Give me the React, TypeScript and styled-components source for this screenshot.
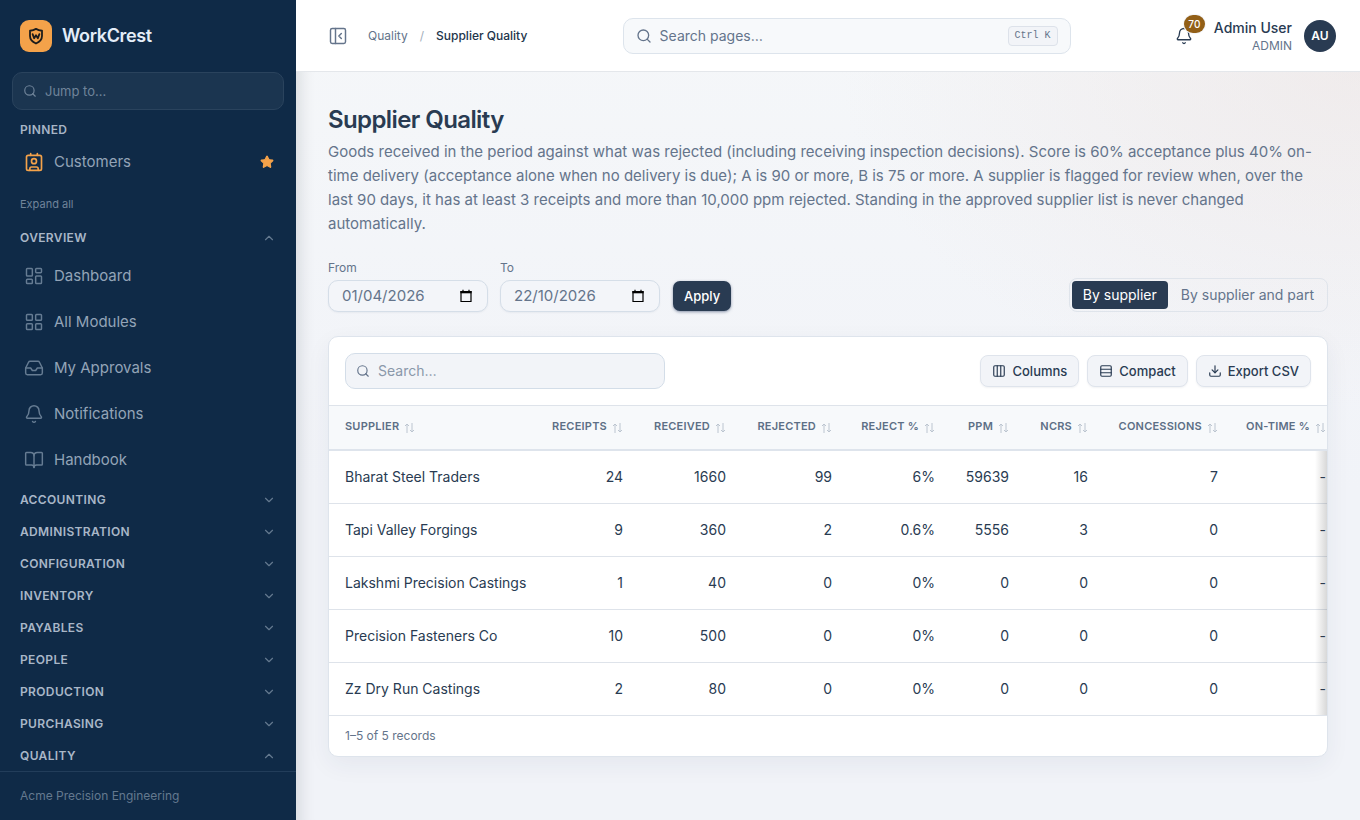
import React from 'react';
import styled, { createGlobalStyle, css } from 'styled-components';
import {
  Bell,
  BookOpen,
  ChevronDown,
  ChevronUp,
  Columns3,
  Contact,
  Download,
  Inbox,
  LayoutDashboard,
  LayoutGrid,
  PanelLeftClose,
  Rows3,
  Search,
  Star,
} from 'lucide-react';

const GlobalStyle = createGlobalStyle`
  *, *::before, *::after { box-sizing: border-box; }
  body {
    margin: 0;
    font-family: Inter, 'Liberation Sans', sans-serif;
    font-size: 14px;
    line-height: 20px;
    color: #293b52;
    -webkit-font-smoothing: antialiased;
  }
  button, input { font: inherit; color: inherit; }
  button { cursor: pointer; }
  h1, p { margin: 0; }
`;

const Shell = styled.div`
  display: grid;
  grid-template-columns: 296px minmax(0, 1fr);
  height: 100vh;
  overflow: hidden;
`;

const Sidebar = styled.aside`
  display: flex;
  flex-direction: column;
  min-height: 0;
  background: #0f2a47;
  color: #a7b5c6;
`;

const Brand = styled.div`
  display: flex;
  align-items: center;
  gap: 10px;
  height: 72px;
  flex: none;
  padding: 0 20px;
  font-size: 18px;
  font-weight: 600;
  letter-spacing: -0.02em;
  color: #e4edf8;
`;

const BrandMark = styled.span`
  display: grid;
  place-items: center;
  width: 32px;
  height: 32px;
  border-radius: 9px;
  background: #f4a24a;
  color: #1c1c1c;
`;

const JumpBox = styled.label`
  display: flex;
  align-items: center;
  gap: 8px;
  flex: none;
  height: 38px;
  margin: 0 12px;
  padding: 0 10px;
  border: 1px solid #2a435d;
  border-radius: 10px;
  background: #1b3550;
  color: #70849a;
`;

const BareInput = styled.input<{ $size: number; $hint: string }>`
  flex: 1;
  min-width: 0;
  padding: 0;
  border: 0;
  outline: 0;
  background: transparent;
  font-size: ${(p) => p.$size}px;
  &::placeholder {
    color: ${(p) => p.$hint};
    opacity: 1;
  }
`;

const Nav = styled.nav`
  flex: 1;
  min-height: 0;
  overflow: hidden;
`;

const Section = styled.button`
  display: flex;
  align-items: center;
  justify-content: space-between;
  width: 100%;
  height: 32px;
  padding: 0 20px;
  border: 0;
  background: none;
  font-size: 12px;
  font-weight: 600;
  letter-spacing: 0.03em;
  text-transform: uppercase;
  color: #a9b7c8;
  svg { color: #64798f; }
`;

const PinnedTitle = styled.div`
  padding: 12px 20px 0;
  font-size: 12px;
  line-height: 16px;
  font-weight: 600;
  letter-spacing: 0.03em;
  text-transform: uppercase;
`;

const ItemLink = styled.a<{ $pinned?: boolean }>`
  display: flex;
  align-items: center;
  gap: 10px;
  height: ${(p) => (p.$pinned ? 48 : 46)}px;
  padding: 0 22px ${(p) => (p.$pinned ? 0 : 2)}px 24px;
  font-size: 15px;
  color: #93a4b7;
  text-decoration: none;
  svg { color: ${(p) => (p.$pinned ? '#f4a24a' : '#667c93')}; }
  span { flex: 1; }
`;

const ExpandAll = styled.button`
  display: block;
  height: 36px;
  padding: 0 20px;
  border: 0;
  background: none;
  font-size: 11px;
  color: #70849a;
`;

const Company = styled.div`
  flex: none;
  height: 49px;
  padding: 16px 20px;
  border-top: 1px solid #223d5a;
  font-size: 12px;
  line-height: 16px;
  color: #64798f;
`;

const Main = styled.div`
  display: flex;
  flex-direction: column;
  min-width: 0;
  min-height: 0;
  background:
    radial-gradient(ellipse 520px 340px at 100% 8%, rgba(234, 222, 220, 0.45), rgba(234, 222, 220, 0) 100%),
    linear-gradient(180deg, #f5f7f9 0%, #f1f3f8 60%);
`;

const Topbar = styled.header`
  display: flex;
  align-items: center;
  flex: none;
  height: 72px;
  padding: 0 24px 0 32px;
  background: #fff;
  border-bottom: 1px solid #e4e7eb;
`;

const Crumbs = styled.nav`
  display: flex;
  align-items: center;
  gap: 12px;
  font-size: 12px;
  a { color: #64748b; text-decoration: none; }
  i { color: #a3aebb; font-style: normal; }
  strong { color: #22344b; font-weight: 500; }
`;

const IconButton = styled.button`
  position: relative;
  display: grid;
  place-items: center;
  padding: 0;
  border: 0;
  background: none;
`;

const Collapse = styled(IconButton)`
  margin-right: 8px;
  color: #64748b;
`;

const Alerts = styled(IconButton)`
  width: 36px;
  height: 36px;
`;

const PageSearch = styled.label`
  display: flex;
  align-items: center;
  gap: 8px;
  flex: 0 1 448px;
  height: 36px;
  margin: 0 auto;
  padding: 0 12px;
  border: 1px solid #dde4ec;
  border-radius: 10px;
  background: #f7f9fb;
  color: #64748b;
`;

const Kbd = styled.kbd`
  padding: 0 6px;
  border: 1px solid #dde2ea;
  border-radius: 4px;
  background: #f2f4f8;
  font-family: 'Liberation Mono', monospace;
  font-size: 10px;
  line-height: 18px;
`;

const Account = styled.div`
  display: flex;
  align-items: center;
  gap: 12px;
`;

const Badge = styled.span`
  position: absolute;
  top: -3px;
  right: -3px;
  min-width: 21px;
  padding: 0 4px;
  border-radius: 9px;
  background: #925f17;
  box-shadow: 0 0 0 1px #f3f5f9;
  color: #fff;
  font-size: 10px;
  line-height: 18px;
  font-weight: 500;
`;

const Person = styled.div`
  padding-top: 2px;
  text-align: right;
  font-size: 14px;
  line-height: 18px;
  font-weight: 500;
  small {
    display: block;
    font-size: 12px;
    line-height: 18px;
    font-weight: 400;
    color: #64748b;
  }
`;

const Avatar = styled.span`
  display: grid;
  place-items: center;
  width: 32px;
  height: 32px;
  border-radius: 50%;
  background: #293b52;
  color: #fff;
  font-size: 12px;
  font-weight: 600;
`;

const Content = styled.main`
  flex: 1;
  min-height: 0;
  padding: 32px;
  box-shadow: inset 20px 0 16px -16px rgba(20, 24, 32, 0.12);
`;

const Title = styled.h1`
  font-size: 24px;
  line-height: 32px;
  font-weight: 600;
  letter-spacing: -0.025em;
`;

const Lead = styled.p`
  margin-top: 4px;
  font-size: 15px;
  line-height: 24px;
  color: #64748b;
`;

const Filters = styled.form`
  display: flex;
  align-items: flex-end;
  gap: 12px;
  margin-top: 24px;
`;

const Field = styled.label`
  display: flex;
  flex-direction: column;
  gap: 4px;
  font-size: 12px;
  line-height: 16px;
  color: #64748b;
`;

const DateBox = styled.span`
  display: flex;
  align-items: center;
  width: 160px;
  height: 32px;
  padding: 0 14px 0 13px;
  border: 1px solid #d5dee8;
  border-radius: 10px;
  background: #f3f5f9;
  box-shadow: 0 1px 2px rgba(20, 40, 70, 0.05);
  svg { color: #000; }
`;

const Apply = styled.button`
  height: 30px;
  margin: 0 0 1px 1px;
  padding: 0 11px;
  border: 0;
  border-radius: 7px;
  background: #293b52;
  box-shadow: 0 1px 3px rgba(30, 50, 90, 0.5);
  color: #fff;
  font-size: 13px;
  font-weight: 500;
`;

const Segments = styled.div`
  display: flex;
  gap: 2px;
  margin-left: auto;
  padding: 2px;
  border: 1px solid #dfe4eb;
  border-radius: 8px;
`;

const Segment = styled.button<{ $on?: boolean }>`
  height: 28px;
  padding: 0 11px;
  border: 0;
  border-radius: 4px;
  background: none;
  color: #64748b;
  font-size: 14px;
  ${(p) => p.$on && css`
    background: #293b52;
    color: #fff;
  `}
`;

const Card = styled.section`
  margin-top: 24px;
  border: 1px solid #dee4ec;
  border-radius: 10px;
  background: #fff;
  overflow: hidden;
  box-shadow: 0 8px 24px rgba(30, 50, 80, 0.06);
`;

const Tools = styled.div`
  display: flex;
  align-items: center;
  gap: 8px;
  padding: 16px;
`;

const TableSearch = styled.label`
  display: flex;
  align-items: center;
  gap: 8px;
  width: 320px;
  height: 36px;
  margin-right: auto;
  padding: 0 10px;
  border: 1px solid #d3dde8;
  border-radius: 10px;
  background: #f2f4f8;
  color: #64748b;
`;

const ToolButton = styled.button`
  display: flex;
  align-items: center;
  gap: 6px;
  height: 32px;
  padding: 0 11px;
  border: 1px solid #dfe4ec;
  border-radius: 8px;
  background: #f2f4f8;
  box-shadow: 0 1px 2px rgba(20, 40, 70, 0.06);
  font-size: 13px;
  font-weight: 500;
`;

const Viewport = styled.div`
  position: relative;
  overflow: hidden;
  border-top: 1px solid #dee3ea;
`;

const EdgeShade = styled.div`
  position: absolute;
  top: 45px;
  right: 0;
  bottom: 1px;
  width: 12px;
  background: linear-gradient(270deg, rgba(60, 60, 60, 0.2), rgba(60, 60, 60, 0));
`;

const Table = styled.table`
  table-layout: fixed;
  width: 100%;
  min-width: 1013px;
  border-collapse: collapse;
  th, td { padding: 0 16px 0 8px; text-align: right; font-weight: 400; white-space: nowrap; }
  th:first-child, td:first-child { padding-left: 16px; text-align: left; }
  thead th {
    height: 44px;
    padding-bottom: 4px;
    background: #f7f9fb;
    border-bottom: 2px solid #dee4ec;
    font-size: 11px;
    font-weight: 600;
    letter-spacing: 0.02em;
    text-transform: uppercase;
    color: #5d6f86;
  }
  tbody td { height: 53px; border-bottom: 1px solid #dee3ea; font-size: 14px; }
`;

const SortIcon = styled.svg`
  margin-left: 5px;
  vertical-align: -4px;
  color: #bcc5d0;
`;

const Footer = styled.footer`
  padding: 12px 16px;
  font-size: 12px;
  line-height: 16px;
  color: #64748b;
`;

const columns: [string, number][] = [
  ['Supplier', 208],
  ['Receipts', 102],
  ['Received', 103],
  ['Rejected', 106],
  ['Reject %', 103],
  ['PPM', 74],
  ['NCRs', 79],
  ['Concessions', 130],
  ['On-time %', 108],
];

const rows = [
  ['Bharat Steel Traders', '24', '1660', '99', '6%', '59639', '16', '7', '-'],
  ['Tapi Valley Forgings', '9', '360', '2', '0.6%', '5556', '3', '0', '-'],
  ['Lakshmi Precision Castings', '1', '40', '0', '0%', '0', '0', '0', '-'],
  ['Precision Fasteners Co', '10', '500', '0', '0%', '0', '0', '0', '-'],
  ['Zz Dry Run Castings', '2', '80', '0', '0%', '0', '0', '0', '-'],
];

const overview = [
  { label: 'Dashboard', icon: LayoutDashboard },
  { label: 'All Modules', icon: LayoutGrid },
  { label: 'My Approvals', icon: Inbox },
  { label: 'Notifications', icon: Bell },
  { label: 'Handbook', icon: BookOpen },
];

const closedSections = [
  'Accounting', 'Administration', 'Configuration', 'Inventory',
  'Payables', 'People', 'Production', 'Purchasing',
];

function DateField({ label, value }: { label: string; value: string }) {
  return (
    <Field>
      {label}
      <DateBox>
        <BareInput $size={15} $hint="#8a98aa" defaultValue={value} inputMode="numeric" />
        <svg width="14" height="14" viewBox="0 0 14 14" fill="none" stroke="currentColor">
          <path d="M2 2.500h10v10H2z" strokeWidth="1.200" />
          <path d="M1.400 2h11.200v2.300H1.400z" fill="currentColor" stroke="none" />
          <path d="M4 .800v2M10 .800v2" strokeWidth="1.200" />
        </svg>
      </DateBox>
    </Field>
  );
}

export default function App() {
  return (
    <>
      <GlobalStyle />
      <Shell>
        <Sidebar>
          <Brand>
            <BrandMark>
              <svg width="18" height="18" viewBox="0 0 24 24" fill="none" stroke="currentColor" strokeWidth="2.4" strokeLinecap="round" strokeLinejoin="round">
                <path d="M12 2.500c2.500 1.500 5 2.200 8 2.500v7c0 5-3.500 8-8 10-4.500-2-8-5-8-10V5c3-.3 5.500-1 8-2.500Z" />
                <path d="m7.500 9.500 2 5.500 2.500-4 2.500 4 2-5.500" />
              </svg>
            </BrandMark>
            WorkCrest
          </Brand>
          <JumpBox>
            <Search size={14} />
            <BareInput $size={13} $hint="#70849a" placeholder="Jump to…" aria-label="Jump to" />
          </JumpBox>
          <Nav>
            <PinnedTitle>Pinned</PinnedTitle>
            <ItemLink href="#customers" $pinned>
              <Contact size={20} strokeWidth={2} />
              <span>Customers</span>
              <Star size={14} fill="currentColor" />
            </ItemLink>
            <ExpandAll>Expand all</ExpandAll>
            <Section>Overview<ChevronUp size={14} /></Section>
            {overview.map(({ label, icon: Icon }) => (
              <ItemLink key={label} href="#overview">
                <Icon size={20} strokeWidth={1.75} />
                <span>{label}</span>
              </ItemLink>
            ))}
            {closedSections.map((name) => (
              <Section key={name}>{name}<ChevronDown size={14} /></Section>
            ))}
            <Section>Quality<ChevronUp size={14} /></Section>
          </Nav>
          <Company>Acme Precision Engineering</Company>
        </Sidebar>

        <Main>
          <Topbar>
            <Crumbs aria-label="Breadcrumb">
              <Collapse type="button" aria-label="Collapse sidebar"><PanelLeftClose size={20} strokeWidth={1.75} /></Collapse>
              <a href="#quality">Quality</a>
              <i>/</i>
              <strong>Supplier Quality</strong>
            </Crumbs>
            <PageSearch>
              <Search size={16} />
              <BareInput $size={14} $hint="#64748b" placeholder="Search pages…" aria-label="Search pages" />
              <Kbd>Ctrl K</Kbd>
            </PageSearch>
            <Account>
              <Alerts type="button" aria-label="Notifications">
                <Bell size={18} strokeWidth={1.75} />
                <Badge>70</Badge>
              </Alerts>
              <Person>Admin User<small>ADMIN</small></Person>
              <Avatar>AU</Avatar>
            </Account>
          </Topbar>

          <Content>
            <Title>Supplier Quality</Title>
            <Lead>
              Goods received in the period against what was rejected (including receiving inspection decisions). Score
              is 60% acceptance plus 40% on-time delivery (acceptance alone when no delivery is due); A is 90 or more,
              B is 75 or more. A supplier is flagged for review when, over the last 90 days, it has at least 3 receipts
              and more than 10,000 ppm rejected. Standing in the approved supplier list is never changed automatically.
            </Lead>

            <Filters onSubmit={(e) => e.preventDefault()}>
              <DateField label="From" value="01/04/2026" />
              <DateField label="To" value="22/10/2026" />
              <Apply type="submit">Apply</Apply>
              <Segments>
                <Segment type="button" $on>By supplier</Segment>
                <Segment type="button">By supplier and part</Segment>
              </Segments>
            </Filters>

            <Card>
              <Tools>
                <TableSearch>
                  <Search size={14} />
                  <BareInput $size={14} $hint="#8a98aa" placeholder="Search…" aria-label="Search suppliers" />
                </TableSearch>
                <ToolButton><Columns3 size={14} />Columns</ToolButton>
                <ToolButton><Rows3 size={14} />Compact</ToolButton>
                <ToolButton><Download size={14} />Export CSV</ToolButton>
              </Tools>
              <Viewport>
                <Table>
                  <colgroup>
                    {columns.map(([name, width]) => <col key={name} width={width} />)}
                  </colgroup>
                  <thead>
                    <tr>
                      {columns.map(([name]) => (
                        <th key={name} scope="col">
                          {name}
                          <SortIcon width="11" height="12" viewBox="0 0 11 12" fill="none" stroke="currentColor">
                            <path d="M3 11V2M1 4l2-2 2 2M8 1v9M6 8l2 2 2-2" />
                          </SortIcon>
                        </th>
                      ))}
                    </tr>
                  </thead>
                  <tbody>
                    {rows.map((row) => (
                      <tr key={row[0]}>
                        {row.map((cell, i) => <td key={columns[i][0]}>{cell}</td>)}
                      </tr>
                    ))}
                  </tbody>
                </Table>
                <EdgeShade />
              </Viewport>
              <Footer>1–5 of 5 records</Footer>
            </Card>
          </Content>
        </Main>
      </Shell>
    </>
  );
}
